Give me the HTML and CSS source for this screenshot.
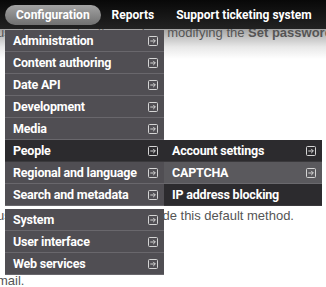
FILE: index.html
```html
<!DOCTYPE html>
<html>
<head>
  <meta charset="UTF-8">
  <link rel="stylesheet" href="styles.css">
</head>
<body>
  <div class="toolbar">
    <ul class="nav">
      <li class="nav-item active">Configuration</li>
      <li class="nav-item">Reports</li>
      <li class="nav-item">Support ticketing system</li>
      <li class="nav-item">Help</li>
    </ul>
  </div>

  <div class="content">
    <p class="lead">user's account settings when modifying the <strong>Set password</strong> field.</p>
    <p class="note">users permissions can override this default method.</p>
    <p class="tail">mail.</p>
  </div>

  <ul class="dropdown">
    <li class="menu-row"><span>Administration</span><svg class="arrow" viewBox="0 0 10 10"><rect x="0.5" y="0.5" width="9" height="9" rx="1"/><path d="M2.3 5H7.3M5.2 2.9L7.3 5L5.2 7.1"/></svg></li>
    <li class="menu-row"><span>Content authoring</span><svg class="arrow" viewBox="0 0 10 10"><rect x="0.5" y="0.5" width="9" height="9" rx="1"/><path d="M2.3 5H7.3M5.2 2.9L7.3 5L5.2 7.1"/></svg></li>
    <li class="menu-row"><span>Date API</span><svg class="arrow" viewBox="0 0 10 10"><rect x="0.5" y="0.5" width="9" height="9" rx="1"/><path d="M2.3 5H7.3M5.2 2.9L7.3 5L5.2 7.1"/></svg></li>
    <li class="menu-row"><span>Development</span><svg class="arrow" viewBox="0 0 10 10"><rect x="0.5" y="0.5" width="9" height="9" rx="1"/><path d="M2.3 5H7.3M5.2 2.9L7.3 5L5.2 7.1"/></svg></li>
    <li class="menu-row"><span>Media</span><svg class="arrow" viewBox="0 0 10 10"><rect x="0.5" y="0.5" width="9" height="9" rx="1"/><path d="M2.3 5H7.3M5.2 2.9L7.3 5L5.2 7.1"/></svg></li>
    <li class="menu-row open">
      <span>People</span><svg class="arrow" viewBox="0 0 10 10"><rect x="0.5" y="0.5" width="9" height="9" rx="1"/><path d="M2.3 5H7.3M5.2 2.9L7.3 5L5.2 7.1"/></svg>
      <ul class="submenu">
        <li class="menu-row dark"><span>Account settings</span><svg class="arrow" viewBox="0 0 10 10"><rect x="0.5" y="0.5" width="9" height="9" rx="1"/><path d="M2.3 5H7.3M5.2 2.9L7.3 5L5.2 7.1"/></svg></li>
        <li class="menu-row"><span>CAPTCHA</span><svg class="arrow" viewBox="0 0 10 10"><rect x="0.5" y="0.5" width="9" height="9" rx="1"/><path d="M2.3 5H7.3M5.2 2.9L7.3 5L5.2 7.1"/></svg></li>
        <li class="menu-row dark"><span>IP address blocking</span></li>
      </ul>
    </li>
    <li class="menu-row"><span>Regional and language</span><svg class="arrow" viewBox="0 0 10 10"><rect x="0.5" y="0.5" width="9" height="9" rx="1"/><path d="M2.3 5H7.3M5.2 2.9L7.3 5L5.2 7.1"/></svg></li>
    <li class="menu-row"><span>Search and metadata</span><svg class="arrow" viewBox="0 0 10 10"><rect x="0.5" y="0.5" width="9" height="9" rx="1"/><path d="M2.3 5H7.3M5.2 2.9L7.3 5L5.2 7.1"/></svg></li>
    <li class="menu-row after-gap"><span>System</span><svg class="arrow" viewBox="0 0 10 10"><rect x="0.5" y="0.5" width="9" height="9" rx="1"/><path d="M2.3 5H7.3M5.2 2.9L7.3 5L5.2 7.1"/></svg></li>
    <li class="menu-row"><span>User interface</span><svg class="arrow" viewBox="0 0 10 10"><rect x="0.5" y="0.5" width="9" height="9" rx="1"/><path d="M2.3 5H7.3M5.2 2.9L7.3 5L5.2 7.1"/></svg></li>
    <li class="menu-row"><span>Web services</span><svg class="arrow" viewBox="0 0 10 10"><rect x="0.5" y="0.5" width="9" height="9" rx="1"/><path d="M2.3 5H7.3M5.2 2.9L7.3 5L5.2 7.1"/></svg></li>
  </ul>
</body>
</html>
```

FILE: styles.css
```css
body {
  margin: 0;
  width: 326px;
  height: 287px;
  overflow: hidden;
  background: #fff;
  font-family: "Liberation Sans", Arial, sans-serif;
  position: relative;
}

ul {
  list-style: none;
  margin: 0;
  padding: 0;
}

.toolbar {
  position: relative;
  z-index: 2;
  height: 29px;
  background: linear-gradient(#080808, #222);
  overflow: hidden;
}

.nav {
  display: flex;
  padding: 5px 0 0 5px;
  white-space: nowrap;
}

.nav-item {
  height: 20px;
  line-height: 20px;
  padding: 0 11px;
  font-family: Roboto, sans-serif;
  font-weight: bold;
  font-size: 12px;
  color: #fff;
}

.nav-item.active {
  background: linear-gradient(#a2a2a2, #707070);
  border-radius: 10px;
}

.content {
  margin-left: -3px;
  height: 258px;
  overflow: hidden;
  background: linear-gradient(#a4a4a4 0px, #e8e8e8 18px, #fff 30px);
  color: #555;
  font-size: 13px;
}

.content p {
  margin: 0;
  line-height: 16px;
  white-space: nowrap;
}

.lead {
  position: relative;
  top: -4px;
}

.note {
  margin-top: 163px !important;
}

.tail {
  margin-top: 49px !important;
}

.dropdown {
  position: absolute;
  top: 30px;
  left: 5px;
  width: 159px;
  z-index: 1;
}

.menu-row {
  position: relative;
  height: 21px;
  border-bottom: 1px solid #69676c;
  background: #504e53;
  display: flex;
  justify-content: space-between;
  align-items: center;
  padding: 0 6px 0 8px;
  font-family: Roboto, sans-serif;
  font-weight: bold;
  font-size: 12.5px;
  letter-spacing: -0.2px;
  color: #fff;
  white-space: nowrap;
}

.menu-row.after-gap {
  margin-top: 3px;
}

.menu-row.open,
.menu-row.dark {
  background: #2c2b2e;
  border-bottom-color: #3a393c;
}

.arrow {
  width: 10px;
  height: 10px;
  fill: none;
  stroke: #d4d4d4;
  stroke-width: 1;
}

.submenu {
  position: absolute;
  top: 0;
  left: 159px;
  width: 158px;
}

.submenu .menu-row {
  background: #5a595d;
  border-bottom-color: #6a696d;
}

.submenu .menu-row.dark {
  background: #2c2b2e;
  border-bottom-color: #3a393c;
}
```
